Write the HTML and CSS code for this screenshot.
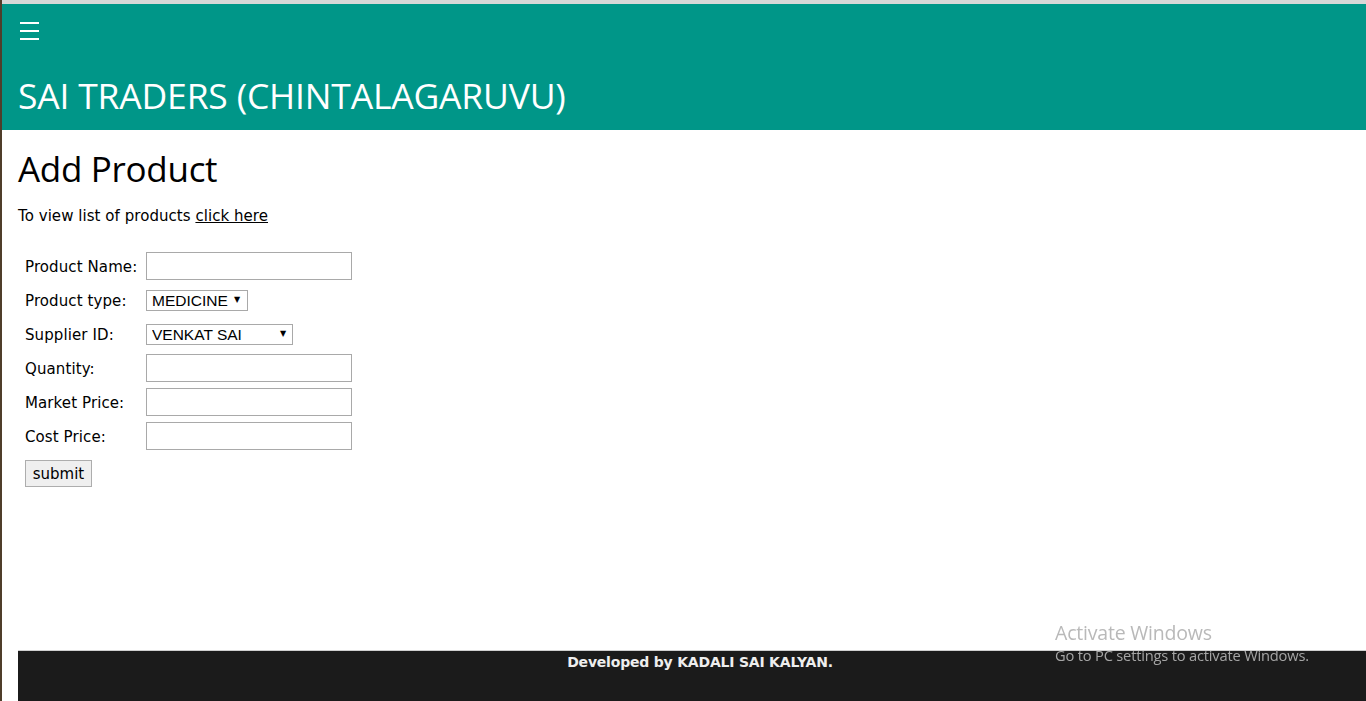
FILE: index.html
```html
<!DOCTYPE html>
<html lang="en">
<head>
<meta charset="utf-8">
<title>Add Product - SAI TRADERS</title>
<link rel="stylesheet" href="styles.css">
</head>
<body>
<div class="page">
  <header class="topbar">
    <button class="menu-btn" type="button" aria-label="Menu">
      <svg width="19" height="18" viewBox="0 0 19 18"><rect x="0" y="0" width="19" height="2" fill="#fff"/><rect x="0" y="8" width="19" height="2" fill="#fff"/><rect x="0" y="16" width="19" height="2" fill="#fff"/></svg>
    </button>
    <h1 class="brand">SAI TRADERS (CHINTALAGARUVU)</h1>
  </header>
  <main class="content">
    <h1 class="title">Add Product</h1>
    <p class="intro">To view list of products <a href="#">click here</a></p>
    <form class="product-form">
      <label for="pname">Product Name:</label>
      <input id="pname" type="text" class="field">
      <label for="ptype">Product type:</label>
      <span class="select-wrap sel-type"><select id="ptype"><option>MEDICINE</option></select></span>
      <label for="sid">Supplier ID:</label>
      <span class="select-wrap sel-supplier"><select id="sid"><option>VENKAT SAI</option></select></span>
      <label for="qty">Quantity:</label>
      <input id="qty" type="text" class="field">
      <label for="mprice">Market Price:</label>
      <input id="mprice" type="text" class="field">
      <label for="cprice">Cost Price:</label>
      <input id="cprice" type="text" class="field">
      <button type="submit" class="submit">submit</button>
    </form>
  </main>
  <footer class="footer">Developed by KADALI SAI KALYAN.</footer>
</div>
<div class="watermark">
  <div class="wm-title">Activate Windows</div>
  <div class="wm-sub">Go to PC settings to activate Windows.</div>
</div>
</body>
</html>
```
FILE: styles.css
```css
html, body {
  margin: 0;
  padding: 0;
  height: 100%;
  overflow: hidden;
}
body {
  background: #fff;
  border-left: 2px solid #4f3d2a;
  box-sizing: border-box;
  font-family: "DejaVu Sans", Verdana, sans-serif;
  font-size: 15px;
  color: #000;
}
.page {
  display: flex;
  flex-direction: column;
  height: 100%;
  border-top: 4px solid #d7d7d7;
  box-sizing: border-box;
}
.topbar {
  background: #009688;
  color: #fff;
  height: 126px;
  display: flex;
  flex-direction: column;
  align-items: flex-start;
}
.menu-btn {
  background: none;
  border: 0;
  padding: 18px 16px 0 18px;
  margin: 0;
  cursor: pointer;
  line-height: 0;
}
.brand {
  margin: 33px 0 0 16px;
  font-family: "Open Sans", sans-serif;
  font-weight: 400;
  font-size: 35.5px;
  line-height: 44px;
  letter-spacing: -0.2px;
}
.content {
  flex: 1;
  padding: 0 16px;
}
.title {
  margin: 16px 0 0;
  font-family: "Open Sans", sans-serif;
  font-weight: 400;
  font-size: 35px;
  line-height: 46px;
  letter-spacing: -0.3px;
}
.intro {
  margin: 13px 0 0;
  line-height: 22px;
  letter-spacing: 0.05px;
}
.intro a {
  color: #000;
  text-decoration: underline;
}
.product-form {
  margin-top: 25px;
  padding-left: 7px;
  display: grid;
  grid-template-columns: 121px auto;
  grid-auto-rows: 28px;
  row-gap: 6px;
  align-items: center;
  justify-items: start;
}
.product-form label {
  padding-top: 2px;
  letter-spacing: 0.1px;
}
.field {
  width: 206px;
  height: 28px;
  box-sizing: border-box;
  border: 1px solid #a9a9a9;
  font: inherit;
  margin: 0;
  padding: 1px 3px;
}
.select-wrap {
  position: relative;
  display: inline-block;
}
.select-wrap select {
  appearance: none;
  -webkit-appearance: none;
  height: 21px;
  box-sizing: border-box;
  border: 1px solid #a9a9a9;
  border-radius: 0;
  background: #fff;
  font-family: "Liberation Sans", Arial, sans-serif;
  font-size: 15.5px;
  color: #000;
  padding: 0 0 0 5px;
  margin: 0;
  line-height: 19px;
}
.select-wrap::after {
  content: "\25BC";
  position: absolute;
  top: 5px;
  font-size: 8px;
  line-height: 10px;
  pointer-events: none;
}
.sel-type select { width: 102px; }
.sel-type::after { left: 88px; }
.sel-supplier select { width: 147px; }
.sel-supplier::after { left: 134px; }
.submit {
  grid-column: 1;
  align-self: start;
  margin-top: 4px;
  height: 27px;
  width: 67px;
  padding: 0;
  font: inherit;
  color: #000;
  background: #efefef;
  border: 1px solid #adadad;
  border-radius: 0;
}
.footer {
  flex: 0 0 51px;
  margin-left: 16px;
  width: 100%;
  box-sizing: border-box;
  border-top: 1px solid #cfcfcf;
  background: #1b1b1b;
  color: #eee;
  text-align: center;
  font-weight: bold;
  font-size: 14px;
  letter-spacing: -0.2px;
  padding-top: 3px;
}
.watermark {
  position: fixed;
  left: 1055px;
  top: 620px;
  font-family: "Open Sans", sans-serif;
  pointer-events: none;
}
.wm-title {
  color: #b9b9b9;
  font-size: 19.5px;
  line-height: 26px;
  letter-spacing: -0.2px;
}
.wm-sub {
  color: #a5a5a5;
  font-size: 14.7px;
  line-height: 19px;
  letter-spacing: -0.2px;
}
```
